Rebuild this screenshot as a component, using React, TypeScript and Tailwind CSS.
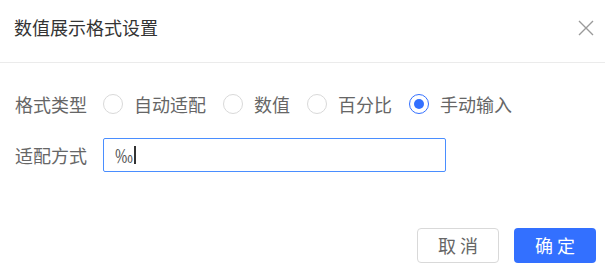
import React, { useState } from 'react';

const options = ['自动适配', '数值', '百分比', '手动输入'];

const Radio: React.FC<{ checked: boolean; label: string; onClick: () => void }> = ({ checked, label, onClick }) => (
  <button type="button" onClick={onClick} className="flex items-center gap-[11px] text-[18px] text-[#666]">
    <span
      className={
        checked
          ? 'flex h-[20px] w-[20px] items-center justify-center rounded-full border-[1.5px] border-[#3370ff]'
          : 'flex h-[20px] w-[20px] items-center justify-center rounded-full border border-[#d9d9d9]'
      }
    >
      {checked && <span className="h-[10px] w-[10px] rounded-full bg-[#3370ff]" />}
    </span>
    <span>{label}</span>
  </button>
);

export default function App() {
  const [type, setType] = useState(3);

  return (
    <div className="h-[276px] w-[605px] bg-white font-['Noto_Sans_CJK_SC','Liberation_Sans',sans-serif] leading-normal">
      {/* header */}
      <div className="flex h-[63px] items-start justify-between border-b border-[#ebebeb] pl-[14px] pr-[11px] pt-[14px]">
        <h2 className="text-[18px] text-[#333]">数值展示格式设置</h2>
        <button type="button" className="mt-[6px]">
          <svg width="16" height="16" viewBox="0 0 16 16" fill="none" stroke="#9a9a9a" strokeWidth="1.4">
            <path d="M1 1L15 15M15 1L1 15" />
          </svg>
        </button>
      </div>

      {/* body */}
      <div className="flex flex-col gap-[17px] pl-[15px] pt-[24px]">
        <div className="flex h-[34px] items-center">
          <span className="w-[88px] text-[18px] text-[#666]">格式类型</span>
          <div className="flex items-center gap-[17px]">
            {options.map((o, i) => (
              <Radio key={o} label={o} checked={type === i} onClick={() => setType(i)} />
            ))}
          </div>
        </div>
        <div className="flex h-[34px] items-center">
          <span className="w-[88px] text-[18px] text-[#666]">适配方式</span>
          <div className="flex h-[34px] w-[343px] items-center rounded-[2px] border border-[#4a8eff] pl-[11px] text-[18px] text-[#555]">
            <span>‰</span>
            <span className="ml-[1px] h-[18px] w-[2px] bg-[#333]" />
          </div>
        </div>
      </div>

      {/* footer */}
      <div className="mt-[56px] flex justify-end gap-[15px] pr-[9px]">
        <button
          type="button"
          className="h-[35px] w-[82px] rounded-[4px] border border-[#d9d9d9] bg-white text-[18px] text-[#666]"
        >
          取 消
        </button>
        <button type="button" className="h-[35px] w-[82px] rounded-[4px] bg-[#3370ff] text-[18px] text-white">
          确 定
        </button>
      </div>
    </div>
  );
}
